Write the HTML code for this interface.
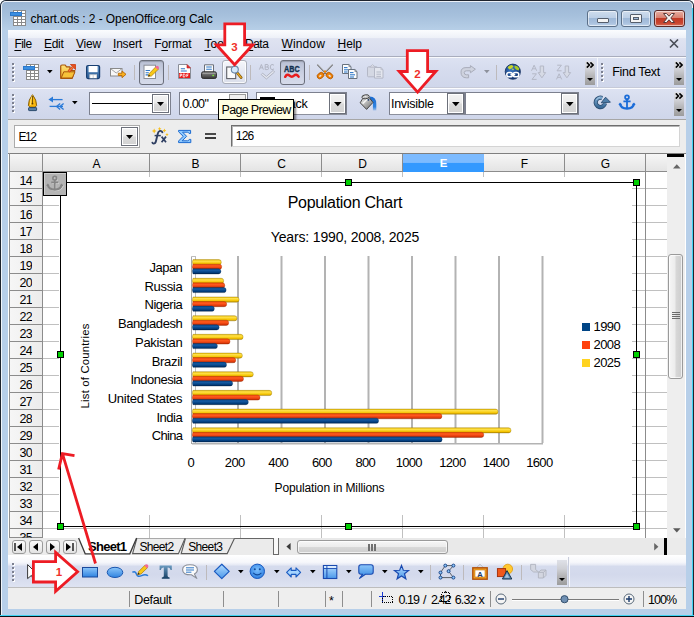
<!DOCTYPE html>
<html>
<head>
<meta charset="utf-8">
<title>chart.ods : 2 - OpenOffice.org Calc</title>
<style>
*{box-sizing:border-box;margin:0;padding:0}
html,body{width:694px;height:617px;overflow:hidden;background:#fff}
body{font-family:"Liberation Sans",sans-serif;font-size:12px;color:#000;position:relative}
.a{position:absolute}
.t{position:absolute;white-space:pre}
u{text-decoration:underline;text-underline-offset:1.5px;text-decoration-thickness:1px}
.tbbg{background:linear-gradient(#dde2f2 0,#d6dcee 40%,#cfd6ea 100%)}
.sep{position:absolute;width:1px;background:#bdbabc}
.ovf{position:absolute;width:10px;background:linear-gradient(#dfe1e8 0,#cfd0d5 35%,#b4b4b6 65%,#9c9c9c 100%)}
.combo{position:absolute;background:#fff;border:1px solid #7c808e;border-bottom-color:#8c909c}
.cbtn{position:absolute;border:1px solid #6c707a;background:linear-gradient(#f3f3f3 0,#ebebeb 48%,#dadada 52%,#d2d2d2 100%);box-shadow:inset 0 0 0 1px #fff}
.hd{position:absolute;background:linear-gradient(#f6f6f6 0,#ededed 50%,#e4e4e4 100%);border-right:1px solid #8c8c8c;border-bottom:1px solid #8c8c8c}
.handle{position:absolute;width:7px;height:7px;background:#00d000;border:1px solid #000}
</style>
</head>
<body>
<div class="a" style="left:0px;top:0px;width:694px;height:617px;background:#b7cfe9;border-radius:6px 6px 0 0;overflow:hidden"><div class="a" style="left:0px;top:0px;width:694px;height:31px;background:linear-gradient(#9ab5d3 0,#a6c0dc 50%,#b8d0e8 100%)"></div></div>
<div class="a" style="left:0px;top:0px;width:694px;height:616px;border:1px solid #1e242e;border-bottom:none;border-radius:6px 6px 0 0;"></div>
<div class="a" style="left:1px;top:1px;width:692px;height:615px;border:1px solid rgba(255,255,255,.8);border-bottom:none;border-radius:5px 5px 0 0;"></div>
<div class="a" style="left:692px;top:8px;width:1px;height:608px;background:#3fd3f2"></div>
<div class="a" style="left:0px;top:615px;width:694px;height:1px;background:#3fd3f2"></div>
<div class="a" style="left:0px;top:616px;width:694px;height:1px;background:#0a1016"></div>
<div class="t" style="left:30.60px;top:13.40px;font-size:12px;line-height:12px;letter-spacing:-0.092px;">chart.ods : 2 - OpenOffice.org Calc</div>
<div class="a" style="left:587px;top:10px;width:31px;height:17px;border:1px solid #5b7089;border-radius:3px;background:linear-gradient(#cfdded 0,#bccfe6 45%,#9fb9d8 50%,#a9c1de 80%,#bfd3ea 100%);box-shadow:inset 0 0 0 1px rgba(255,255,255,.55)"></div>
<div class="a" style="left:620.5px;top:10px;width:30px;height:17px;border:1px solid #5b7089;border-radius:3px;background:linear-gradient(#cfdded 0,#bccfe6 45%,#9fb9d8 50%,#a9c1de 80%,#bfd3ea 100%);box-shadow:inset 0 0 0 1px rgba(255,255,255,.55)"></div>
<div class="a" style="left:653.5px;top:10px;width:31px;height:17px;border:1px solid #5a2a28;border-radius:3px;background:linear-gradient(#e8b0a4 0,#d88070 45%,#c23a26 50%,#c8452f 80%,#d8705a 100%);box-shadow:inset 0 0 0 1px rgba(255,255,255,.55)"></div>
<div class="a" style="left:597px;top:18px;width:12px;height:5px;background:#f4f4f4;border:1px solid #555e6c;border-radius:1px"></div>
<div class="a" style="left:630px;top:14px;width:12px;height:9px;background:#f4f4f4;border:1px solid #555e6c;border-radius:1px"></div>
<div class="a" style="left:633px;top:17px;width:6px;height:3px;background:#9fb9d8;border:1px solid #555e6c"></div>
<svg class="a" style="left:661px;top:12px;" width="16" height="12" viewBox="0 0 16 12"><path d="M2.5 1.5 L5.5 1.5 L8 4.2 L10.5 1.5 L13.5 1.5 L9.8 6 L13.5 10.5 L10.5 10.5 L8 7.8 L5.5 10.5 L2.5 10.5 L6.2 6 Z" fill="#f6f6f6" stroke="#5a3a3a" stroke-width="1"/></svg>
<div class="a" style="left:8px;top:30px;width:678px;height:27px;background:linear-gradient(#fbfcfe 0,#eef1f8 28%,#dfe3f1 32%,#d6dbed 100%)"></div>
<div class="a" style="left:8px;top:56px;width:678px;height:1px;background:#a9adbd"></div>
<div class="t" style="left:14.40px;top:38.00px;font-size:12px;line-height:12px;letter-spacing:-0.511px;"><u>F</u>ile</div>
<div class="t" style="left:44.00px;top:38.00px;font-size:12px;line-height:12px;letter-spacing:-0.322px;"><u>E</u>dit</div>
<div class="t" style="left:76.00px;top:38.00px;font-size:12px;line-height:12px;letter-spacing:-0.224px;"><u>V</u>iew</div>
<div class="t" style="left:113.00px;top:38.00px;font-size:12px;line-height:12px;letter-spacing:-0.203px;"><u>I</u>nsert</div>
<div class="t" style="left:154.20px;top:38.00px;font-size:12px;line-height:12px;letter-spacing:-0.103px;">F<u>o</u>rmat</div>
<div class="t" style="left:204.40px;top:38.00px;font-size:12px;line-height:12px;letter-spacing:0.117px;"><u>T</u>ools</div>
<div class="t" style="left:245.00px;top:38.00px;font-size:12px;line-height:12px;letter-spacing:-0.490px;"><u>D</u>ata</div>
<div class="t" style="left:281.60px;top:38.00px;font-size:12px;line-height:12px;letter-spacing:0.102px;"><u>W</u>indow</div>
<div class="t" style="left:337.50px;top:38.00px;font-size:12px;line-height:12px;letter-spacing:-0.047px;"><u>H</u>elp</div>
<svg class="a" style="left:669px;top:39px;" width="10" height="9" viewBox="0 0 10 9"><path d="M1 0.5 L9 8.5 M9 0.5 L1 8.5" stroke="#4a4e58" stroke-width="1.6" fill="none"/></svg>
<div class="a tbbg" style="left:8px;top:57px;width:678px;height:31px;"></div>
<div class="a" style="left:8px;top:57px;width:678px;height:1px;background:#f8f9fc"></div>
<div class="a tbbg" style="left:8px;top:89px;width:678px;height:30px;"></div>
<div class="a" style="left:8px;top:87px;width:678px;height:1px;background:#c6cad8"></div>
<div class="a" style="left:8px;top:88px;width:678px;height:1px;background:#fbfcfe"></div>
<div class="a" style="left:8px;top:119px;width:678px;height:1px;background:#a6a6a6"></div>
<div class="a" style="left:13px;top:64px;width:2px;height:2px;background:#fff"></div><div class="a" style="left:12px;top:63px;width:2px;height:2px;background:#7c8090"></div><div class="a" style="left:13px;top:68px;width:2px;height:2px;background:#fff"></div><div class="a" style="left:12px;top:67px;width:2px;height:2px;background:#7c8090"></div><div class="a" style="left:13px;top:72px;width:2px;height:2px;background:#fff"></div><div class="a" style="left:12px;top:71px;width:2px;height:2px;background:#7c8090"></div><div class="a" style="left:13px;top:76px;width:2px;height:2px;background:#fff"></div><div class="a" style="left:12px;top:75px;width:2px;height:2px;background:#7c8090"></div><div class="a" style="left:13px;top:80px;width:2px;height:2px;background:#fff"></div><div class="a" style="left:12px;top:79px;width:2px;height:2px;background:#7c8090"></div>
<div class="a" style="left:13px;top:95px;width:2px;height:2px;background:#fff"></div><div class="a" style="left:12px;top:94px;width:2px;height:2px;background:#7c8090"></div><div class="a" style="left:13px;top:99px;width:2px;height:2px;background:#fff"></div><div class="a" style="left:12px;top:98px;width:2px;height:2px;background:#7c8090"></div><div class="a" style="left:13px;top:103px;width:2px;height:2px;background:#fff"></div><div class="a" style="left:12px;top:102px;width:2px;height:2px;background:#7c8090"></div><div class="a" style="left:13px;top:107px;width:2px;height:2px;background:#fff"></div><div class="a" style="left:12px;top:106px;width:2px;height:2px;background:#7c8090"></div><div class="a" style="left:13px;top:111px;width:2px;height:2px;background:#fff"></div><div class="a" style="left:12px;top:110px;width:2px;height:2px;background:#7c8090"></div>
<div class="a" style="left:602px;top:64px;width:2px;height:2px;background:#fff"></div><div class="a" style="left:601px;top:63px;width:2px;height:2px;background:#7c8090"></div><div class="a" style="left:602px;top:68px;width:2px;height:2px;background:#fff"></div><div class="a" style="left:601px;top:67px;width:2px;height:2px;background:#7c8090"></div><div class="a" style="left:602px;top:72px;width:2px;height:2px;background:#fff"></div><div class="a" style="left:601px;top:71px;width:2px;height:2px;background:#7c8090"></div><div class="a" style="left:602px;top:76px;width:2px;height:2px;background:#fff"></div><div class="a" style="left:601px;top:75px;width:2px;height:2px;background:#7c8090"></div><div class="a" style="left:602px;top:80px;width:2px;height:2px;background:#fff"></div><div class="a" style="left:601px;top:79px;width:2px;height:2px;background:#7c8090"></div>
<div class="sep" style="left:134px;top:65px;height:15px"></div>
<div class="sep" style="left:167.5px;top:65px;height:15px"></div>
<div class="sep" style="left:250px;top:65px;height:15px"></div>
<div class="sep" style="left:308.5px;top:65px;height:15px"></div>
<div class="sep" style="left:496px;top:65px;height:15px"></div>
<div class="a" style="left:596.5px;top:58px;width:1px;height:29px;background:#f4f6fb"></div>
<svg class="a" style="left:46.7px;top:70px;" width="6" height="4" viewBox="0 0 6 4"><path d="M0 0 H5.6 L2.8 3.3 Z" fill="#000"/></svg>
<svg class="a" style="left:483.8px;top:70px;" width="6" height="4" viewBox="0 0 6 4"><path d="M0 0 H5.6 L2.8 3.3 Z" fill="#8d919c"/></svg>
<div class="ovf" style="left:585px;top:61px;height:24px"></div><svg class="a" style="left:586px;top:62px;" width="8" height="6" viewBox="0 0 8 6"><path d="M0.8 0.4 L3.4 3 L0.8 5.6 M4.4 0.4 L7 3 L4.4 5.6" stroke="#000" stroke-width="1.6" fill="none"/></svg><svg class="a" style="left:587px;top:78px;" width="6" height="3" viewBox="0 0 6 3"><path d="M0 0 H6 L3 3 Z" fill="#000"/></svg>
<div class="ovf" style="left:674px;top:61px;height:24px"></div><svg class="a" style="left:675px;top:62px;" width="8" height="6" viewBox="0 0 8 6"><path d="M0.8 0.4 L3.4 3 L0.8 5.6 M4.4 0.4 L7 3 L4.4 5.6" stroke="#000" stroke-width="1.6" fill="none"/></svg><svg class="a" style="left:676px;top:78px;" width="6" height="3" viewBox="0 0 6 3"><path d="M0 0 H6 L3 3 Z" fill="#000"/></svg>
<div class="ovf" style="left:674px;top:92px;height:24px"></div><svg class="a" style="left:675px;top:93px;" width="8" height="6" viewBox="0 0 8 6"><path d="M0.8 0.4 L3.4 3 L0.8 5.6 M4.4 0.4 L7 3 L4.4 5.6" stroke="#000" stroke-width="1.6" fill="none"/></svg><svg class="a" style="left:676px;top:109px;" width="6" height="3" viewBox="0 0 6 3"><path d="M0 0 H6 L3 3 Z" fill="#000"/></svg>
<div class="t" style="left:612.30px;top:66.15px;font-size:12.5px;line-height:12.5px;letter-spacing:-0.322px;">Find Text</div>
<div class="a" style="left:139px;top:60px;width:25px;height:25px;border:1px solid #6b6f7c;border-radius:3px;background:linear-gradient(#b9c0d4,#cdd3e4 60%,#d6dbea);box-shadow:inset 0 1px 1px rgba(0,0,0,.18)"></div>
<div class="a" style="left:280px;top:60px;width:25px;height:25px;border:1px solid #6b6f7c;border-radius:3px;background:linear-gradient(#b9c0d4,#cdd3e4 60%,#d6dbea);box-shadow:inset 0 1px 1px rgba(0,0,0,.18)"></div>
<div class="a" style="left:222px;top:60px;width:25px;height:24px;border:1px solid #a9adb8;border-radius:3px;background:linear-gradient(#f6f7fb,#e6e9f3 50%,#dadeea);box-shadow:inset 0 0 0 1px rgba(255,255,255,.8)"></div>
<div class="combo" style="left:89px;top:92px;width:82px;height:23px"></div><div class="cbtn" style="left:152px;top:94px;width:17px;height:19px"></div><svg class="a" style="left:157px;top:102.0px;" width="7" height="4" viewBox="0 0 7 4"><path d="M0 0 H7 L3.5 4 Z" fill="#000"/></svg>
<div class="a" style="left:92px;top:103px;width:60px;height:1px;background:#000"></div>
<div class="combo" style="left:179px;top:92px;width:69px;height:23px"></div>
<div class="t" style="left:182.60px;top:97.85px;font-size:12.5px;line-height:12.5px;letter-spacing:-0.636px;">0.00"</div>
<div class="a" style="left:229px;top:94px;width:17px;height:19px;border:1px solid #9a9a9a;background:#f0f0f0"></div>
<div class="combo" style="left:256px;top:92px;width:91px;height:23px"></div><div class="cbtn" style="left:329px;top:93px;width:17px;height:21px"></div><svg class="a" style="left:333.6px;top:102.0px;" width="8" height="5" viewBox="0 0 8 5"><path d="M0 0 H7.6 L3.8 4.2 Z" fill="#000"/></svg>
<div class="a" style="left:260px;top:97px;width:15px;height:9px;background:#000"></div>
<div class="t" style="left:278.00px;top:97.85px;font-size:12.5px;line-height:12.5px;letter-spacing:-0.196px;">Black</div>
<div class="combo" style="left:389px;top:92px;width:76px;height:23px"></div><div class="cbtn" style="left:447px;top:93px;width:17px;height:21px"></div><svg class="a" style="left:451.6px;top:102.0px;" width="8" height="5" viewBox="0 0 8 5"><path d="M0 0 H7.6 L3.8 4.2 Z" fill="#000"/></svg>
<div class="t" style="left:391.00px;top:97.85px;font-size:12.5px;line-height:12.5px;letter-spacing:-0.275px;">Invisible</div>
<div class="combo" style="left:465px;top:92px;width:114px;height:23px"></div><div class="cbtn" style="left:561px;top:93px;width:17px;height:21px"></div><svg class="a" style="left:565.6px;top:102.0px;" width="8" height="5" viewBox="0 0 8 5"><path d="M0 0 H7.6 L3.8 4.2 Z" fill="#000"/></svg>
<svg class="a" style="left:71.8px;top:101px;" width="6" height="4" viewBox="0 0 6 4"><path d="M0 0 H5.6 L2.8 3.3 Z" fill="#000"/></svg>
<div class="a" style="left:218px;top:99px;width:76px;height:21px;background:#ffffe1;border:1px solid #000;box-shadow:2px 2px 2px rgba(0,0,0,.45)"></div>
<div class="t" style="left:221.60px;top:103.75px;font-size:12.5px;line-height:12.5px;letter-spacing:-0.677px;">Page Preview</div>
<div class="a" style="left:8px;top:120px;width:678px;height:33px;background:#ededed"></div>
<div class="a" style="left:14px;top:125px;width:126px;height:23px;background:#fff;border:1px solid #ababab"></div>
<div class="a cbtn" style="left:121px;top:127px;width:17px;height:19px;"></div>
<svg class="a" style="left:126px;top:135px;" width="7" height="4" viewBox="0 0 7 4"><path d="M0 0 H7 L3.5 4 Z" fill="#000"/></svg>
<div class="t" style="left:18.50px;top:131.00px;font-size:12px;line-height:12px;letter-spacing:-1.453px;">E12</div>
<div class="a" style="left:231px;top:125px;width:449px;height:22px;background:#fff;border:1px solid #d4d4d4;border-top:1px solid #6e6e6e;border-left:1px solid #6e6e6e;box-shadow:inset 1px 1px 0 #b4b4b4"></div>
<div class="t" style="left:235.80px;top:130.40px;font-size:12px;line-height:12px;letter-spacing:-0.810px;">126</div>
<div class="a" style="left:205px;top:133px;width:11px;height:2px;background:#4a4a4a"></div>
<div class="a" style="left:205px;top:137px;width:11px;height:2px;background:#3a3a3a"></div>
<div class="a" style="left:8px;top:153px;width:678px;height:385px;background:#fff"></div>
<div class="a" style="left:8px;top:153px;width:678px;height:1px;background:#7f7f7f"></div>
<div class="a" style="left:9px;top:153px;width:1px;height:385px;background:#8f8f8f"></div>
<div class="hd" style="left:10px;top:154px;width:33px;height:18px"></div>
<div class="hd" style="left:43px;top:154px;width:107px;height:18px"></div>
<div class="t" style="left:92.49px;top:157.60px;font-size:12px;line-height:12px;">A</div>
<div class="hd" style="left:150px;top:154px;width:91px;height:18px"></div>
<div class="t" style="left:191.49px;top:157.60px;font-size:12px;line-height:12px;">B</div>
<div class="hd" style="left:241px;top:154px;width:81px;height:18px"></div>
<div class="t" style="left:277.16px;top:157.60px;font-size:12px;line-height:12px;">C</div>
<div class="hd" style="left:322px;top:154px;width:81px;height:18px"></div>
<div class="t" style="left:358.16px;top:157.60px;font-size:12px;line-height:12px;">D</div>
<div class="a" style="left:403px;top:154px;width:81px;height:18px;background:linear-gradient(#7dbbff 0,#7dbbff 47%,#3399ff 50%,#3399ff 100%)"></div>
<div class="t" style="left:439.86px;top:157.85px;font-size:11.5px;line-height:11.5px;font-weight:700;color:#fff;">E</div>
<div class="hd" style="left:484px;top:154px;width:81px;height:18px"></div>
<div class="t" style="left:520.83px;top:157.60px;font-size:12px;line-height:12px;">F</div>
<div class="hd" style="left:565px;top:154px;width:81px;height:18px"></div>
<div class="t" style="left:600.83px;top:157.60px;font-size:12px;line-height:12px;">G</div>
<div class="hd" style="left:646px;top:154px;width:22px;height:18px"></div>
<div class="hd" style="left:10px;top:172px;width:33px;height:17px;background:linear-gradient(90deg,#f6f6f6,#ececec)"></div>
<div class="t" style="left:19.50px;top:174.95px;font-size:12.5px;line-height:12.5px;letter-spacing:-0.653px;clip-path:inset(0 0 0px 0);">14</div>
<div class="hd" style="left:10px;top:189px;width:33px;height:17px;background:linear-gradient(90deg,#f6f6f6,#ececec)"></div>
<div class="t" style="left:19.50px;top:191.95px;font-size:12.5px;line-height:12.5px;letter-spacing:-0.653px;clip-path:inset(0 0 0px 0);">15</div>
<div class="hd" style="left:10px;top:206px;width:33px;height:17px;background:linear-gradient(90deg,#f6f6f6,#ececec)"></div>
<div class="t" style="left:19.50px;top:208.95px;font-size:12.5px;line-height:12.5px;letter-spacing:-0.653px;clip-path:inset(0 0 0px 0);">16</div>
<div class="hd" style="left:10px;top:223px;width:33px;height:17px;background:linear-gradient(90deg,#f6f6f6,#ececec)"></div>
<div class="t" style="left:19.50px;top:225.95px;font-size:12.5px;line-height:12.5px;letter-spacing:-0.653px;clip-path:inset(0 0 0px 0);">17</div>
<div class="hd" style="left:10px;top:240px;width:33px;height:17px;background:linear-gradient(90deg,#f6f6f6,#ececec)"></div>
<div class="t" style="left:19.50px;top:242.95px;font-size:12.5px;line-height:12.5px;letter-spacing:-0.653px;clip-path:inset(0 0 0px 0);">18</div>
<div class="hd" style="left:10px;top:257px;width:33px;height:17px;background:linear-gradient(90deg,#f6f6f6,#ececec)"></div>
<div class="t" style="left:19.50px;top:259.95px;font-size:12.5px;line-height:12.5px;letter-spacing:-0.653px;clip-path:inset(0 0 0px 0);">19</div>
<div class="hd" style="left:10px;top:274px;width:33px;height:17px;background:linear-gradient(90deg,#f6f6f6,#ececec)"></div>
<div class="t" style="left:19.50px;top:276.95px;font-size:12.5px;line-height:12.5px;letter-spacing:-0.653px;clip-path:inset(0 0 0px 0);">20</div>
<div class="hd" style="left:10px;top:291px;width:33px;height:17px;background:linear-gradient(90deg,#f6f6f6,#ececec)"></div>
<div class="t" style="left:19.50px;top:293.95px;font-size:12.5px;line-height:12.5px;letter-spacing:-0.653px;clip-path:inset(0 0 0px 0);">21</div>
<div class="hd" style="left:10px;top:308px;width:33px;height:17px;background:linear-gradient(90deg,#f6f6f6,#ececec)"></div>
<div class="t" style="left:19.50px;top:310.95px;font-size:12.5px;line-height:12.5px;letter-spacing:-0.653px;clip-path:inset(0 0 0px 0);">22</div>
<div class="hd" style="left:10px;top:325px;width:33px;height:17px;background:linear-gradient(90deg,#f6f6f6,#ececec)"></div>
<div class="t" style="left:19.50px;top:327.95px;font-size:12.5px;line-height:12.5px;letter-spacing:-0.653px;clip-path:inset(0 0 0px 0);">23</div>
<div class="hd" style="left:10px;top:342px;width:33px;height:17px;background:linear-gradient(90deg,#f6f6f6,#ececec)"></div>
<div class="t" style="left:19.50px;top:344.95px;font-size:12.5px;line-height:12.5px;letter-spacing:-0.653px;clip-path:inset(0 0 0px 0);">24</div>
<div class="hd" style="left:10px;top:359px;width:33px;height:17px;background:linear-gradient(90deg,#f6f6f6,#ececec)"></div>
<div class="t" style="left:19.50px;top:361.95px;font-size:12.5px;line-height:12.5px;letter-spacing:-0.653px;clip-path:inset(0 0 0px 0);">25</div>
<div class="hd" style="left:10px;top:376px;width:33px;height:17px;background:linear-gradient(90deg,#f6f6f6,#ececec)"></div>
<div class="t" style="left:19.50px;top:378.95px;font-size:12.5px;line-height:12.5px;letter-spacing:-0.653px;clip-path:inset(0 0 0px 0);">26</div>
<div class="hd" style="left:10px;top:393px;width:33px;height:17px;background:linear-gradient(90deg,#f6f6f6,#ececec)"></div>
<div class="t" style="left:19.50px;top:395.95px;font-size:12.5px;line-height:12.5px;letter-spacing:-0.653px;clip-path:inset(0 0 0px 0);">27</div>
<div class="hd" style="left:10px;top:410px;width:33px;height:17px;background:linear-gradient(90deg,#f6f6f6,#ececec)"></div>
<div class="t" style="left:19.50px;top:412.95px;font-size:12.5px;line-height:12.5px;letter-spacing:-0.653px;clip-path:inset(0 0 0px 0);">28</div>
<div class="hd" style="left:10px;top:427px;width:33px;height:17px;background:linear-gradient(90deg,#f6f6f6,#ececec)"></div>
<div class="t" style="left:19.50px;top:429.95px;font-size:12.5px;line-height:12.5px;letter-spacing:-0.653px;clip-path:inset(0 0 0px 0);">29</div>
<div class="hd" style="left:10px;top:444px;width:33px;height:17px;background:linear-gradient(90deg,#f6f6f6,#ececec)"></div>
<div class="t" style="left:19.50px;top:446.95px;font-size:12.5px;line-height:12.5px;letter-spacing:-0.653px;clip-path:inset(0 0 0px 0);">30</div>
<div class="hd" style="left:10px;top:461px;width:33px;height:17px;background:linear-gradient(90deg,#f6f6f6,#ececec)"></div>
<div class="t" style="left:19.50px;top:463.95px;font-size:12.5px;line-height:12.5px;letter-spacing:-0.653px;clip-path:inset(0 0 0px 0);">31</div>
<div class="hd" style="left:10px;top:478px;width:33px;height:17px;background:linear-gradient(90deg,#f6f6f6,#ececec)"></div>
<div class="t" style="left:19.50px;top:480.95px;font-size:12.5px;line-height:12.5px;letter-spacing:-0.653px;clip-path:inset(0 0 0px 0);">32</div>
<div class="hd" style="left:10px;top:495px;width:33px;height:17px;background:linear-gradient(90deg,#f6f6f6,#ececec)"></div>
<div class="t" style="left:19.50px;top:497.95px;font-size:12.5px;line-height:12.5px;letter-spacing:-0.653px;clip-path:inset(0 0 0px 0);">33</div>
<div class="hd" style="left:10px;top:512px;width:33px;height:17px;background:linear-gradient(90deg,#f6f6f6,#ececec)"></div>
<div class="t" style="left:19.50px;top:514.95px;font-size:12.5px;line-height:12.5px;letter-spacing:-0.653px;clip-path:inset(0 0 0px 0);">34</div>
<div class="hd" style="left:10px;top:529px;width:33px;height:9px;background:linear-gradient(90deg,#f6f6f6,#ececec)"></div>
<div class="t" style="left:19.50px;top:531.95px;font-size:12.5px;line-height:12.5px;letter-spacing:-0.653px;clip-path:inset(0 0 7px 0);">35</div>
<div class="a" style="left:43px;top:188px;width:624px;height:1px;background:#c0c0c0"></div>
<div class="a" style="left:43px;top:205px;width:624px;height:1px;background:#c0c0c0"></div>
<div class="a" style="left:43px;top:222px;width:624px;height:1px;background:#c0c0c0"></div>
<div class="a" style="left:43px;top:239px;width:624px;height:1px;background:#c0c0c0"></div>
<div class="a" style="left:43px;top:256px;width:624px;height:1px;background:#c0c0c0"></div>
<div class="a" style="left:43px;top:273px;width:624px;height:1px;background:#c0c0c0"></div>
<div class="a" style="left:43px;top:290px;width:624px;height:1px;background:#c0c0c0"></div>
<div class="a" style="left:43px;top:307px;width:624px;height:1px;background:#c0c0c0"></div>
<div class="a" style="left:43px;top:324px;width:624px;height:1px;background:#c0c0c0"></div>
<div class="a" style="left:43px;top:341px;width:624px;height:1px;background:#c0c0c0"></div>
<div class="a" style="left:43px;top:358px;width:624px;height:1px;background:#c0c0c0"></div>
<div class="a" style="left:43px;top:375px;width:624px;height:1px;background:#c0c0c0"></div>
<div class="a" style="left:43px;top:392px;width:624px;height:1px;background:#c0c0c0"></div>
<div class="a" style="left:43px;top:409px;width:624px;height:1px;background:#c0c0c0"></div>
<div class="a" style="left:43px;top:426px;width:624px;height:1px;background:#c0c0c0"></div>
<div class="a" style="left:43px;top:443px;width:624px;height:1px;background:#c0c0c0"></div>
<div class="a" style="left:43px;top:460px;width:624px;height:1px;background:#c0c0c0"></div>
<div class="a" style="left:43px;top:477px;width:624px;height:1px;background:#c0c0c0"></div>
<div class="a" style="left:43px;top:494px;width:624px;height:1px;background:#c0c0c0"></div>
<div class="a" style="left:43px;top:511px;width:624px;height:1px;background:#c0c0c0"></div>
<div class="a" style="left:43px;top:528px;width:624px;height:1px;background:#c0c0c0"></div>
<div class="a" style="left:149px;top:172px;width:1px;height:366px;background:#c0c0c0"></div>
<div class="a" style="left:240px;top:172px;width:1px;height:366px;background:#c0c0c0"></div>
<div class="a" style="left:321px;top:172px;width:1px;height:366px;background:#c0c0c0"></div>
<div class="a" style="left:402px;top:172px;width:1px;height:366px;background:#c0c0c0"></div>
<div class="a" style="left:483px;top:172px;width:1px;height:366px;background:#c0c0c0"></div>
<div class="a" style="left:564px;top:172px;width:1px;height:366px;background:#c0c0c0"></div>
<div class="a" style="left:645px;top:172px;width:1px;height:366px;background:#c0c0c0"></div>
<div class="a" style="left:645px;top:172px;width:1px;height:366px;background:#8c8c8c"></div>
<div class="a" style="left:59px;top:177px;width:573px;height:338px;background:#fff"></div>
<div class="t" style="left:287.70px;top:194.50px;font-size:16px;line-height:16px;letter-spacing:-0.299px;">Population Chart</div>
<div class="t" style="left:270.80px;top:230.00px;font-size:14px;line-height:14px;letter-spacing:-0.159px;">Years: 1990, 2008, 2025</div>
<div class="t" style="left:149.60px;top:261.00px;font-size:13px;line-height:13px;letter-spacing:-0.544px;">Japan</div>
<div class="t" style="left:144.50px;top:280.00px;font-size:13px;line-height:13px;letter-spacing:-0.325px;">Russia</div>
<div class="t" style="left:144.50px;top:298.00px;font-size:13px;line-height:13px;letter-spacing:-0.484px;">Nigeria</div>
<div class="t" style="left:118.00px;top:317.00px;font-size:13px;line-height:13px;letter-spacing:-0.437px;">Bangladesh</div>
<div class="t" style="left:135.10px;top:336.00px;font-size:13px;line-height:13px;letter-spacing:-0.334px;">Pakistan</div>
<div class="t" style="left:151.70px;top:355.00px;font-size:13px;line-height:13px;letter-spacing:-0.319px;">Brazil</div>
<div class="t" style="left:130.50px;top:373.00px;font-size:13px;line-height:13px;letter-spacing:-0.510px;">Indonesia</div>
<div class="t" style="left:107.70px;top:392.00px;font-size:13px;line-height:13px;letter-spacing:-0.265px;">United States</div>
<div class="t" style="left:156.40px;top:411.00px;font-size:13px;line-height:13px;letter-spacing:-0.461px;">India</div>
<div class="t" style="left:151.70px;top:429.00px;font-size:13px;line-height:13px;letter-spacing:-0.674px;">China</div>
<svg class="a" style="left:0px;top:0px;" width="694" height="617" viewBox="0 0 694 617"><rect x="237.0" y="256" width="2" height="187" fill="#b3b3b3"/><rect x="280.5" y="256" width="2" height="187" fill="#b3b3b3"/><rect x="324.0" y="256" width="2" height="187" fill="#b3b3b3"/><rect x="367.5" y="256" width="2" height="187" fill="#b3b3b3"/><rect x="411.0" y="256" width="2" height="187" fill="#b3b3b3"/><rect x="454.5" y="256" width="2" height="187" fill="#b3b3b3"/><rect x="498.0" y="256" width="2" height="187" fill="#b3b3b3"/><rect x="541.5" y="256" width="2" height="187" fill="#b3b3b3"/><path d="M191.5 256.5 L191.5 444" stroke="#a8a8a8" stroke-width="1" fill="none"/><path d="M192 443.8 L543 443.8" stroke="#b3b3b3" stroke-width="1.6" fill="none"/><path d="M191.5 256.5 L196 256.5 M195.5 256.5 V443" stroke="#bdbdbd" stroke-width="1" fill="none"/><defs>
<linearGradient id="gy" x1="0" y1="0" x2="0" y2="1"><stop offset="0" stop-color="#e6b800"/><stop offset=".3" stop-color="#ffe14a"/><stop offset=".75" stop-color="#f5c400"/><stop offset="1" stop-color="#b88a00"/></linearGradient>
<linearGradient id="go" x1="0" y1="0" x2="0" y2="1"><stop offset="0" stop-color="#f0480c"/><stop offset=".35" stop-color="#ff5a1e"/><stop offset=".8" stop-color="#e0380a"/><stop offset="1" stop-color="#9c2400"/></linearGradient>
<linearGradient id="gb" x1="0" y1="0" x2="0" y2="1"><stop offset="0" stop-color="#0a4a8c"/><stop offset=".35" stop-color="#1458a0"/><stop offset=".8" stop-color="#003a78"/><stop offset="1" stop-color="#00244e"/></linearGradient>
</defs><path d="M193 259.60 H218.8 Q221.3 259.60 221.3 262.20 Q221.3 264.80 218.8 264.80 H193 Q191.6 262.20 193 259.60 Z" fill="url(#gy)" stroke="#8a6c00" stroke-width="0.5" stroke-opacity=".7"/><path d="M193 264.15 H219.2 Q221.7 264.15 221.7 266.75 Q221.7 269.35 219.2 269.35 H193 Q191.6 266.75 193 264.15 Z" fill="url(#go)" stroke="#a02c00" stroke-width="0.5" stroke-opacity=".7"/><path d="M193 268.70 H218.4 Q220.9 268.70 220.9 271.30 Q220.9 273.90 218.4 273.90 H193 Q191.6 271.30 193 268.70 Z" fill="url(#gb)" stroke="#00244e" stroke-width="0.5" stroke-opacity=".7"/><path d="M193 278.28 H221.2 Q223.7 278.28 223.7 280.88 Q223.7 283.48 221.2 283.48 H193 Q191.6 280.88 193 278.28 Z" fill="url(#gy)" stroke="#8a6c00" stroke-width="0.5" stroke-opacity=".7"/><path d="M193 282.83 H222.3 Q224.8 282.83 224.8 285.43 Q224.8 288.03 222.3 288.03 H193 Q191.6 285.43 193 282.83 Z" fill="url(#go)" stroke="#a02c00" stroke-width="0.5" stroke-opacity=".7"/><path d="M193 287.38 H223.6 Q226.1 287.38 226.1 289.98 Q226.1 292.58 223.6 292.58 H193 Q191.6 289.98 193 287.38 Z" fill="url(#gb)" stroke="#00244e" stroke-width="0.5" stroke-opacity=".7"/><path d="M193 296.96 H236.6 Q239.1 296.96 239.1 299.56 Q239.1 302.16 236.6 302.16 H193 Q191.6 299.56 193 296.96 Z" fill="url(#gy)" stroke="#8a6c00" stroke-width="0.5" stroke-opacity=".7"/><path d="M193 301.51 H224.2 Q226.7 301.51 226.7 304.11 Q226.7 306.71 224.2 306.71 H193 Q191.6 304.11 193 301.51 Z" fill="url(#go)" stroke="#a02c00" stroke-width="0.5" stroke-opacity=".7"/><path d="M193 306.06 H211.8 Q214.3 306.06 214.3 308.66 Q214.3 311.26 211.8 311.26 H193 Q191.6 308.66 193 306.06 Z" fill="url(#gb)" stroke="#00244e" stroke-width="0.5" stroke-opacity=".7"/><path d="M193 315.64 H234.5 Q237.0 315.64 237.0 318.24 Q237.0 320.84 234.5 320.84 H193 Q191.6 318.24 193 315.64 Z" fill="url(#gy)" stroke="#8a6c00" stroke-width="0.5" stroke-opacity=".7"/><path d="M193 320.19 H226.2 Q228.7 320.19 228.7 322.79 Q228.7 325.39 226.2 325.39 H193 Q191.6 322.79 193 320.19 Z" fill="url(#go)" stroke="#a02c00" stroke-width="0.5" stroke-opacity=".7"/><path d="M193 324.74 H216.6 Q219.1 324.74 219.1 327.34 Q219.1 329.94 216.6 329.94 H193 Q191.6 327.34 193 324.74 Z" fill="url(#gb)" stroke="#00244e" stroke-width="0.5" stroke-opacity=".7"/><path d="M193 334.32 H240.6 Q243.1 334.32 243.1 336.92 Q243.1 339.52 240.6 339.52 H193 Q191.6 336.92 193 334.32 Z" fill="url(#gy)" stroke="#8a6c00" stroke-width="0.5" stroke-opacity=".7"/><path d="M193 338.87 H227.5 Q230.0 338.87 230.0 341.47 Q230.0 344.07 227.5 344.07 H193 Q191.6 341.47 193 338.87 Z" fill="url(#go)" stroke="#a02c00" stroke-width="0.5" stroke-opacity=".7"/><path d="M193 343.42 H214.9 Q217.4 343.42 217.4 346.02 Q217.4 348.62 214.9 348.62 H193 Q191.6 346.02 193 343.42 Z" fill="url(#gb)" stroke="#00244e" stroke-width="0.5" stroke-opacity=".7"/><path d="M193 353.00 H239.9 Q242.4 353.00 242.4 355.60 Q242.4 358.20 239.9 358.20 H193 Q191.6 355.60 193 353.00 Z" fill="url(#gy)" stroke="#8a6c00" stroke-width="0.5" stroke-opacity=".7"/><path d="M193 357.55 H233.2 Q235.7 357.55 235.7 360.15 Q235.7 362.75 233.2 362.75 H193 Q191.6 360.15 193 357.55 Z" fill="url(#go)" stroke="#a02c00" stroke-width="0.5" stroke-opacity=".7"/><path d="M193 362.10 H224.0 Q226.5 362.10 226.5 364.70 Q226.5 367.30 224.0 367.30 H193 Q191.6 364.70 193 362.10 Z" fill="url(#gb)" stroke="#00244e" stroke-width="0.5" stroke-opacity=".7"/><path d="M193 371.68 H250.8 Q253.3 371.68 253.3 374.28 Q253.3 376.88 250.8 376.88 H193 Q191.6 374.28 193 371.68 Z" fill="url(#gy)" stroke="#8a6c00" stroke-width="0.5" stroke-opacity=".7"/><path d="M193 376.23 H241.0 Q243.5 376.23 243.5 378.83 Q243.5 381.43 241.0 381.43 H193 Q191.6 378.83 193 376.23 Z" fill="url(#go)" stroke="#a02c00" stroke-width="0.5" stroke-opacity=".7"/><path d="M193 380.78 H230.1 Q232.6 380.78 232.6 383.38 Q232.6 385.98 230.1 385.98 H193 Q191.6 383.38 193 380.78 Z" fill="url(#gb)" stroke="#00244e" stroke-width="0.5" stroke-opacity=".7"/><path d="M193 390.36 H269.3 Q271.8 390.36 271.8 392.96 Q271.8 395.56 269.3 395.56 H193 Q191.6 392.96 193 390.36 Z" fill="url(#gy)" stroke="#8a6c00" stroke-width="0.5" stroke-opacity=".7"/><path d="M193 394.91 H257.5 Q260.0 394.91 260.0 397.51 Q260.0 400.11 257.5 400.11 H193 Q191.6 397.51 193 394.91 Z" fill="url(#go)" stroke="#a02c00" stroke-width="0.5" stroke-opacity=".7"/><path d="M193 399.46 H245.8 Q248.3 399.46 248.3 402.06 Q248.3 404.66 245.8 404.66 H193 Q191.6 402.06 193 399.46 Z" fill="url(#gb)" stroke="#00244e" stroke-width="0.5" stroke-opacity=".7"/><path d="M193 409.04 H495.5 Q498.0 409.04 498.0 411.64 Q498.0 414.24 495.5 414.24 H193 Q191.6 411.64 193 409.04 Z" fill="url(#gy)" stroke="#8a6c00" stroke-width="0.5" stroke-opacity=".7"/><path d="M193 413.59 H439.4 Q441.9 413.59 441.9 416.19 Q441.9 418.79 439.4 418.79 H193 Q191.6 416.19 193 413.59 Z" fill="url(#go)" stroke="#a02c00" stroke-width="0.5" stroke-opacity=".7"/><path d="M193 418.14 H376.1 Q378.6 418.14 378.6 420.74 Q378.6 423.34 376.1 423.34 H193 Q191.6 420.74 193 418.14 Z" fill="url(#gb)" stroke="#00244e" stroke-width="0.5" stroke-opacity=".7"/><path d="M193 427.72 H508.5 Q511.0 427.72 511.0 430.32 Q511.0 432.92 508.5 432.92 H193 Q191.6 430.32 193 427.72 Z" fill="url(#gy)" stroke="#8a6c00" stroke-width="0.5" stroke-opacity=".7"/><path d="M193 432.27 H481.3 Q483.8 432.27 483.8 434.87 Q483.8 437.47 481.3 437.47 H193 Q191.6 434.87 193 432.27 Z" fill="url(#go)" stroke="#a02c00" stroke-width="0.5" stroke-opacity=".7"/><path d="M193 436.82 H439.6 Q442.1 436.82 442.1 439.42 Q442.1 442.02 439.6 442.02 H193 Q191.6 439.42 193 436.82 Z" fill="url(#gb)" stroke="#00244e" stroke-width="0.5" stroke-opacity=".7"/></svg>
<div class="t" style="left:187.58px;top:456.00px;font-size:13px;line-height:13px;">0</div>
<div class="t" style="left:224.85px;top:456.00px;font-size:13px;line-height:13px;letter-spacing:-0.651px;">200</div>
<div class="t" style="left:268.37px;top:456.00px;font-size:13px;line-height:13px;letter-spacing:-0.651px;">400</div>
<div class="t" style="left:311.89px;top:456.00px;font-size:13px;line-height:13px;letter-spacing:-0.651px;">600</div>
<div class="t" style="left:355.41px;top:456.00px;font-size:13px;line-height:13px;letter-spacing:-0.651px;">800</div>
<div class="t" style="left:395.64px;top:456.00px;font-size:13px;line-height:13px;letter-spacing:-0.651px;">1000</div>
<div class="t" style="left:439.16px;top:456.00px;font-size:13px;line-height:13px;letter-spacing:-0.651px;">1200</div>
<div class="t" style="left:482.68px;top:456.00px;font-size:13px;line-height:13px;letter-spacing:-0.651px;">1400</div>
<div class="t" style="left:526.20px;top:456.00px;font-size:13px;line-height:13px;letter-spacing:-0.651px;">1600</div>
<div class="t" style="left:274.50px;top:482.00px;font-size:12px;line-height:12px;letter-spacing:-0.124px;">Population in Millions</div>
<div class="t" style="left:0.00px;top:-9.05px;font-size:11.3px;line-height:11.3px;letter-spacing:0.198px;transform-origin:0 0;transform:translate(80.0px,417.4px) rotate(-90deg);">List of Countries</div>
<div class="a" style="left:582px;top:323px;width:8px;height:8px;background:#004586"></div>
<div class="t" style="left:593.60px;top:320.00px;font-size:13px;line-height:13px;letter-spacing:-0.630px;">1990</div>
<div class="a" style="left:582px;top:341px;width:8px;height:8px;background:#ff420e"></div>
<div class="t" style="left:593.60px;top:338.00px;font-size:13px;line-height:13px;letter-spacing:-0.630px;">2008</div>
<div class="a" style="left:582px;top:359px;width:8px;height:8px;background:#ffd320"></div>
<div class="t" style="left:593.60px;top:356.00px;font-size:13px;line-height:13px;letter-spacing:-0.630px;">2025</div>
<div class="a" style="left:60px;top:182px;width:577px;height:345px;border:1px solid #000"></div>
<div class="handle" style="left:345px;top:179px"></div>
<div class="handle" style="left:633px;top:179px"></div>
<div class="handle" style="left:57px;top:351px"></div>
<div class="handle" style="left:633px;top:351px"></div>
<div class="handle" style="left:57px;top:523px"></div>
<div class="handle" style="left:345px;top:523px"></div>
<div class="handle" style="left:633px;top:523px"></div>
<div class="a" style="left:43px;top:172px;width:24px;height:24px;background:#b4b4b4;border:1px solid #000;box-shadow:inset 1px 1px 0 #cfcfcf"></div>
<div class="a" style="left:667px;top:154px;width:18px;height:384px;background:#eeeeee"></div>
<div class="a" style="left:667px;top:154px;width:17px;height:3px;background:#000"></div>
<svg class="a" style="left:672.5px;top:163.5px;" width="8" height="5" viewBox="0 0 8 5"><path d="M0 4.6 L3.8 0.2 L7.6 4.6 Z" fill="#666"/></svg>
<svg class="a" style="left:672.5px;top:527.5px;" width="8" height="5" viewBox="0 0 8 5"><path d="M0 0.2 L3.8 4.6 L7.6 0.2 Z" fill="#5a5a5a"/></svg>
<div class="a" style="left:668px;top:254px;width:15px;height:125px;border:1px solid #9a9a9a;border-radius:3px;background:linear-gradient(90deg,#f6f6f6 0,#ececec 47%,#d8d8d8 53%,#cdcdcd 100%);box-shadow:inset 0 0 0 1px rgba(255,255,255,.7)"></div>
<div class="a" style="left:672px;top:312px;width:8px;height:1px;background:#6a6a6a"></div>
<div class="a" style="left:672px;top:314px;width:8px;height:1px;background:#6a6a6a"></div>
<div class="a" style="left:672px;top:316px;width:8px;height:1px;background:#6a6a6a"></div>
<div class="a" style="left:672px;top:318px;width:8px;height:1px;background:#6a6a6a"></div>
<div class="a" style="left:8px;top:538px;width:678px;height:18px;background:#ebebeb"></div>
<div class="a" style="left:279px;top:538px;width:385px;height:17px;background:#e9e9e9"></div>
<div class="a" style="left:297px;top:540px;width:151px;height:14px;border:1px solid #9a9a9a;border-radius:3px;background:linear-gradient(#f6f6f6 0,#ececec 47%,#d8d8d8 53%,#cdcdcd 100%);box-shadow:inset 0 0 0 1px rgba(255,255,255,.7)"></div>
<div class="a" style="left:368px;top:544px;width:2px;height:7px;background:#707070"></div>
<div class="a" style="left:371px;top:544px;width:2px;height:7px;background:#707070"></div>
<div class="a" style="left:374px;top:544px;width:2px;height:7px;background:#707070"></div>
<svg class="a" style="left:285.5px;top:543px;" width="5" height="8" viewBox="0 0 5 8"><path d="M4.6 0 L0.4 3.6 L4.6 7.2 Z" fill="#3a3a3a"/></svg>
<svg class="a" style="left:653.5px;top:542.5px;" width="5" height="8" viewBox="0 0 5 8"><path d="M0.2 0 L4.4 3.8 L0.2 7.6 Z" fill="#666"/></svg>
<div class="a" style="left:664px;top:538px;width:3px;height:17px;background:#000"></div>
<div class="a" style="left:273px;top:538px;width:6px;height:17px;background:#f8f8f8;border:1px solid #6a6a6a;border-top:none"></div>
<div class="a" style="left:11.5px;top:540px;width:14px;height:14px;border:1px solid #9a9a9a;border-radius:3px;background:linear-gradient(#fbfbfb,#e2e2e2)"></div>
<div class="a" style="left:28.5px;top:540px;width:14px;height:14px;border:1px solid #9a9a9a;border-radius:3px;background:linear-gradient(#fbfbfb,#e2e2e2)"></div>
<div class="a" style="left:45.5px;top:540px;width:14px;height:14px;border:1px solid #9a9a9a;border-radius:3px;background:linear-gradient(#fbfbfb,#e2e2e2)"></div>
<div class="a" style="left:62.5px;top:540px;width:14px;height:14px;border:1px solid #9a9a9a;border-radius:3px;background:linear-gradient(#fbfbfb,#e2e2e2)"></div>
<svg class="a" style="left:14px;top:543px;" width="9" height="8" viewBox="0 0 9 8"><path d="M1 0 V8" stroke="#000" stroke-width="1.3"/><path d="M8 0 L3 4 L8 8 Z" fill="#000"/></svg>
<svg class="a" style="left:32px;top:543px;" width="7" height="8" viewBox="0 0 7 8"><path d="M6 0 L1 4 L6 8 Z" fill="#000"/></svg>
<svg class="a" style="left:49px;top:543px;" width="7" height="8" viewBox="0 0 7 8"><path d="M1 0 L6 4 L1 8 Z" fill="#000"/></svg>
<svg class="a" style="left:65px;top:543px;" width="9" height="8" viewBox="0 0 9 8"><path d="M8 0 V8" stroke="#000" stroke-width="1.3"/><path d="M1 0 L6 4 L1 8 Z" fill="#000"/></svg>
<svg class="a" style="left:0px;top:0px;" width="694" height="617" viewBox="0 0 694 617"><path d="M136 538.5 H273.5" stroke="#666" stroke-width="1" fill="none"/><path d="M136.8 538.5 L132.6 553.6 H178.4 L185 538.5" fill="#ececec" stroke="#5a5a5a" stroke-width="1.1"/><path d="M185.4 538.5 L181.2 553.6 H227.2 L234.4 538.5" fill="#ececec" stroke="#5a5a5a" stroke-width="1.1"/><path d="M78.6 538 L85.2 553.8 H129.8 L136.6 538 Z" fill="#fff" stroke="none"/><path d="M78.6 538 L85.2 553.8 H129.8 L136.6 538" fill="none" stroke="#3a3a3a" stroke-width="1.3"/></svg>
<div class="t" style="left:88.00px;top:540.20px;font-size:13px;line-height:13px;letter-spacing:-0.723px;font-weight:700;">Sheet1</div>
<div class="t" style="left:139.40px;top:541.00px;font-size:12px;line-height:12px;letter-spacing:-0.641px;">Sheet2</div>
<div class="t" style="left:188.20px;top:541.00px;font-size:12px;line-height:12px;letter-spacing:-0.641px;">Sheet3</div>
<div class="a" style="left:8px;top:555px;width:678px;height:33px;background:linear-gradient(#ffffff 0,#f6f7fb 22%,#e6e9f4 30%,#d5dbed 34%,#d3d9ec 60%,#dfe4f2 100%)"></div>
<div class="a" style="left:568px;top:557px;width:1px;height:30px;background:#c9cddb"></div>
<div class="a" style="left:569px;top:557px;width:1px;height:30px;background:#f8f9fc"></div>
<div class="a" style="left:13px;top:564px;width:2px;height:2px;background:#fff"></div><div class="a" style="left:12px;top:563px;width:2px;height:2px;background:#7c8090"></div><div class="a" style="left:13px;top:568px;width:2px;height:2px;background:#fff"></div><div class="a" style="left:12px;top:567px;width:2px;height:2px;background:#7c8090"></div><div class="a" style="left:13px;top:572px;width:2px;height:2px;background:#fff"></div><div class="a" style="left:12px;top:571px;width:2px;height:2px;background:#7c8090"></div><div class="a" style="left:13px;top:576px;width:2px;height:2px;background:#fff"></div><div class="a" style="left:12px;top:575px;width:2px;height:2px;background:#7c8090"></div><div class="a" style="left:13px;top:580px;width:2px;height:2px;background:#fff"></div><div class="a" style="left:12px;top:579px;width:2px;height:2px;background:#7c8090"></div>
<div class="sep" style="left:206px;top:565px;height:15px"></div>
<div class="sep" style="left:430px;top:565px;height:15px"></div>
<div class="sep" style="left:463px;top:565px;height:15px"></div>
<div class="sep" style="left:521px;top:565px;height:15px"></div>
<svg class="a" style="left:237.8px;top:570px;" width="6" height="4" viewBox="0 0 6 4"><path d="M0 0 H5.6 L2.8 3.3 Z" fill="#000"/></svg>
<svg class="a" style="left:273.7px;top:570px;" width="6" height="4" viewBox="0 0 6 4"><path d="M0 0 H5.6 L2.8 3.3 Z" fill="#000"/></svg>
<svg class="a" style="left:310px;top:570px;" width="6" height="4" viewBox="0 0 6 4"><path d="M0 0 H5.6 L2.8 3.3 Z" fill="#000"/></svg>
<svg class="a" style="left:346px;top:570px;" width="6" height="4" viewBox="0 0 6 4"><path d="M0 0 H5.6 L2.8 3.3 Z" fill="#000"/></svg>
<svg class="a" style="left:382px;top:570px;" width="6" height="4" viewBox="0 0 6 4"><path d="M0 0 H5.6 L2.8 3.3 Z" fill="#000"/></svg>
<svg class="a" style="left:417.6px;top:570px;" width="6" height="4" viewBox="0 0 6 4"><path d="M0 0 H5.6 L2.8 3.3 Z" fill="#000"/></svg>
<div class="ovf" style="left:557px;top:560px;height:25px"></div><svg class="a" style="left:559px;top:578px;" width="6" height="3" viewBox="0 0 6 3"><path d="M0 0 H6 L3 3 Z" fill="#000"/></svg>
<div class="a" style="left:8px;top:588px;width:678px;height:21px;background:#eeeeee"></div>
<div class="a" style="left:8px;top:587px;width:678px;height:1px;background:#bdbdbd"></div>
<div class="a" style="left:128.5px;top:591px;width:1px;height:16px;background:#8e8e8e"></div>
<div class="a" style="left:223px;top:591px;width:1px;height:16px;background:#8e8e8e"></div>
<div class="a" style="left:277.5px;top:591px;width:1px;height:16px;background:#8e8e8e"></div>
<div class="a" style="left:324.5px;top:591px;width:1px;height:16px;background:#8e8e8e"></div>
<div class="a" style="left:342px;top:591px;width:1px;height:16px;background:#8e8e8e"></div>
<div class="a" style="left:371px;top:591px;width:1px;height:16px;background:#8e8e8e"></div>
<div class="a" style="left:490px;top:591px;width:1px;height:16px;background:#8e8e8e"></div>
<div class="a" style="left:643px;top:591px;width:1px;height:16px;background:#8e8e8e"></div>
<div class="t" style="left:134.30px;top:594.15px;font-size:12.5px;line-height:12.5px;letter-spacing:-0.373px;">Default</div>
<div class="t" style="left:329.00px;top:595.35px;font-size:12.5px;line-height:12.5px;">*</div>
<div class="t" style="left:398.50px;top:594.15px;font-size:12.5px;line-height:12.5px;letter-spacing:-0.936px;">0.19</div>
<div class="t" style="left:423.00px;top:594.15px;font-size:12.5px;line-height:12.5px;">/</div>
<div class="t" style="left:430.90px;top:594.15px;font-size:12.5px;line-height:12.5px;letter-spacing:-1.286px;">2.42</div>
<div class="t" style="left:454.70px;top:594.15px;font-size:12.5px;line-height:12.5px;letter-spacing:-0.861px;">6.32</div>
<div class="t" style="left:478.40px;top:594.15px;font-size:12.5px;line-height:12.5px;">x</div>
<div class="t" style="left:648.00px;top:593.95px;font-size:12.5px;line-height:12.5px;letter-spacing:-0.946px;">100%</div>
<div class="a" style="left:512px;top:598.5px;width:107px;height:1px;background:#7a7a7a"></div>
<div class="a" style="left:512px;top:599.5px;width:107px;height:1px;background:#fff"></div>
<svg class="a" style="left:495px;top:593px;" width="12" height="12" viewBox="0 0 12 12"><circle cx="6" cy="6" r="5" fill="#f4f4f4" stroke="#5a6a7a" stroke-width="1"/><path d="M3 6 H9" stroke="#1a3a6a" stroke-width="1.4"/></svg>
<svg class="a" style="left:623px;top:593px;" width="12" height="12" viewBox="0 0 12 12"><circle cx="6" cy="6" r="5" fill="#f4f4f4" stroke="#5a6a7a" stroke-width="1"/><path d="M3 6 H9 M6 3 V9" stroke="#1a3a6a" stroke-width="1.4"/></svg>
<svg class="a" style="left:559.5px;top:593px;" width="9" height="13" viewBox="0 0 9 13"><circle cx="4.5" cy="6.2" r="3.6" fill="#6f8fb2" stroke="#34506e" stroke-width="1"/></svg>
<svg class="a" style="left:0;top:0" width="694" height="617" viewBox="0 0 694 617"><defs>
<linearGradient id="bl" x1="0" y1="0" x2="0" y2="1"><stop offset="0" stop-color="#8cc6fa"/><stop offset="1" stop-color="#2f83e0"/></linearGradient>
<linearGradient id="bl2" x1="0" y1="0" x2="0" y2="1"><stop offset="0" stop-color="#b4dcff"/><stop offset="1" stop-color="#4a98ea"/></linearGradient>
<linearGradient id="fold" x1="0" y1="0" x2="0" y2="1"><stop offset="0" stop-color="#fde27a"/><stop offset="1" stop-color="#f0b428"/></linearGradient>
<linearGradient id="flop" x1="0" y1="0" x2="0" y2="1"><stop offset="0" stop-color="#5a8cc0"/><stop offset="1" stop-color="#2c5c94"/></linearGradient>
<linearGradient id="prn" x1="0" y1="0" x2="0" y2="1"><stop offset="0" stop-color="#8a8a8a"/><stop offset="1" stop-color="#3a3a3a"/></linearGradient>
<linearGradient id="tg" x1="0" y1="0" x2="0" y2="1"><stop offset="0" stop-color="#6a9ac0"/><stop offset="1" stop-color="#163e62"/></linearGradient>
<linearGradient id="mt" x1="0" y1="0" x2="1" y2="1"><stop offset="0" stop-color="#f4f4f4"/><stop offset=".5" stop-color="#b0b0b0"/><stop offset="1" stop-color="#6a6a6a"/></linearGradient>
<linearGradient id="pour" x1="0" y1="0" x2="0" y2="1"><stop offset="0" stop-color="#1f6ed0"/><stop offset=".7" stop-color="#2f83e0"/><stop offset="1" stop-color="#2f83e0" stop-opacity=".25"/></linearGradient>
<radialGradient id="glb" cx=".4" cy=".35" r=".7"><stop offset="0" stop-color="#3a78c8"/><stop offset="1" stop-color="#10306a"/></radialGradient>
<radialGradient id="smi" cx=".5" cy=".4" r=".6"><stop offset="0" stop-color="#7cc0ff"/><stop offset="1" stop-color="#2f80e0"/></radialGradient>
<linearGradient id="rot" x1="0" y1="0" x2="0" y2="1"><stop offset="0" stop-color="#7aa6cc"/><stop offset="1" stop-color="#3a6a98"/></linearGradient>
</defs><rect x="13.5" y="10.5" width="12" height="15" fill="#fff" stroke="#8a8a8a"/><path d="M17.5 10.5 v15" stroke="#8a8a8a"/><path d="M21.5 10.5 v15" stroke="#8a8a8a"/><path d="M13.5 13.5 h12" stroke="#8a8a8a"/><path d="M13.5 16.5 h12" stroke="#8a8a8a"/><path d="M13.5 19.5 h12" stroke="#8a8a8a"/><path d="M13.5 22.5 h12" stroke="#8a8a8a"/><rect x="10.5" y="12.5" width="11" height="3" fill="#3a8ee0" stroke="#2a78cc"/><rect x="26.5" y="64.5" width="12" height="15" fill="#fff" stroke="#8a8a8a"/><path d="M30.5 64.5 v15" stroke="#8a8a8a"/><path d="M34.5 64.5 v15" stroke="#8a8a8a"/><path d="M26.5 67.5 h12" stroke="#8a8a8a"/><path d="M26.5 70.5 h12" stroke="#8a8a8a"/><path d="M26.5 73.5 h12" stroke="#8a8a8a"/><path d="M26.5 76.5 h12" stroke="#8a8a8a"/><rect x="23.5" y="66.5" width="11" height="3" fill="#3a8ee0" stroke="#2a78cc"/><g transform="translate(60,64)"><path d="M0.7 14.3 V2.2 Q0.7 1 2 1 H5.2 L6.5 2.8 H10 V6.5 H14.8 L12.2 14.3 Z" fill="url(#fold)" stroke="#a8560c" stroke-width="1.2" stroke-linejoin="round"/><path d="M1.2 14 L3.8 7.8 H15 L12.3 14 Z" fill="#f6c23a" stroke="#a8560c" stroke-width="1" stroke-linejoin="round"/><path d="M8.6 7.4 L12.6 3.4" stroke="#c83a10" stroke-width="2.8"/><path d="M10.4 0.5 H15.5 V5.6 Z" fill="#e8501c" stroke="#c83a10" stroke-width="0.8" stroke-linejoin="round"/><path d="M8.8 7.2 L12.8 3.2" stroke="#f47a3a" stroke-width="1.4"/></g><g transform="translate(86,65)"><rect x="0.6" y="0.6" width="13" height="13" rx="1.5" fill="url(#flop)" stroke="#183f72" stroke-width="1.2"/><rect x="2.6" y="1" width="9" height="6.2" fill="#fff"/><rect x="3.4" y="9.3" width="7.6" height="4" fill="#d8d8d8"/><rect x="4.4" y="10.2" width="2.2" height="2.8" fill="#fff"/><rect x="7.8" y="10.2" width="2.2" height="2.8" fill="#fff"/></g><g transform="translate(110,68)"><rect x="0.5" y="0.5" width="11.5" height="7.5" fill="#f8f8f8" stroke="#8a8a8a"/><path d="M1 1 L6.2 5 L11.5 1" fill="none" stroke="#9a9a9a" stroke-width="0.9"/><path d="M8.3 5.2 H12 V3 L16 6.3 L12 9.7 V7.5 H8.3 Z" fill="#f8b020" stroke="#b86a08" stroke-width="0.9" stroke-linejoin="round"/></g><g transform="translate(143,64)"><rect x="1" y="1.2" width="11.5" height="13.3" fill="#fdfdfd" stroke="#8a8e98"/><path d="M2.6 6.5 h4.5 M2.6 8.7 h3.2 M2.6 10.9 h2.6" stroke="#2f78c8" stroke-width="1.1"/><path d="M5.2 12.4 L6 9.8 L13 2.6 L15.6 5 L8.4 12 Z" fill="#f8c818" stroke="#a87808" stroke-width="0.7"/><path d="M12.2 3.4 L13.2 2 Q14.4 1.2 15.4 2.2 Q16.4 3.2 15.8 4.4 L14.8 5.6 Z" fill="#f06a9a"/><path d="M5.2 12.4 L5.8 10.4 L7.2 11.8 Z" fill="#2a2a2a"/></g><g transform="translate(178,64)"><path d="M0.5 0.5 H9 L12.5 4 V14.5 H0.5 Z" fill="#fdfdfd" stroke="#8a8e98"/><path d="M9 0.5 V4 H12.5 Z" fill="#e83030" stroke="#c02020" stroke-width="0.6"/><path d="M2.8 4.8 h4.2 M2.8 7 h6" stroke="#2f78c8" stroke-width="1.1"/><rect x="1" y="9" width="11" height="5" fill="#e81c1c"/><path d="M2.2 13 V10 h1.4 v1.5 h-1.4 M5.2 10 v3 h1 q1 0 1-1.5 q0-1.5-1-1.5 Z M8.8 13 v-3 h1.8 M8.8 11.5 h1.4" stroke="#fff" stroke-width="0.8" fill="none"/></g><g transform="translate(201,64)"><path d="M3.5 8 V0.8 H12.5 V8" fill="#fdfdfd" stroke="#6a6e78"/><path d="M5.2 3 h5.6 M5.2 5.2 h5.6" stroke="#2f78c8" stroke-width="1.1"/><rect x="0.6" y="7.8" width="14.8" height="6.6" rx="1.6" fill="url(#prn)" stroke="#2a2a2a" stroke-width="1"/><path d="M1.5 9.3 h13" stroke="#b0b0b0" stroke-width="0.8"/><rect x="11.3" y="10.8" width="1.8" height="1.4" fill="#7ae03a"/></g><g transform="translate(226,66)"><rect x="0.7" y="1" width="9" height="11.6" fill="#fbfbfb" stroke="#5e6068" stroke-width="1.1"/><path d="M11.5 7.2 L15.2 11.6" stroke="#7a5208" stroke-width="2.6" stroke-linecap="round"/><path d="M11.6 7.4 L15 11.4" stroke="#f0b020" stroke-width="1.4" stroke-linecap="round"/><circle cx="8.8" cy="3.6" r="3.5" fill="#d4e8fa" stroke="#6a88a8" stroke-width="1.1"/></g><g transform="translate(259,64)" fill="none" stroke="#b2b6c4" stroke-width="1"><path d="M0.4 5.6 L2.4 0.5 L4.4 5.6 M1.1 3.8 H3.7 M6.2 0.5 V5.6 H8.2 Q9.6 5.6 9.6 4.2 Q9.6 3 8.2 3 H6.2 M8 3 Q9.3 3 9.3 1.8 Q9.3 0.5 8 0.5 H6.2 M15 1.4 Q14.2 0.4 13 0.5 Q11.3 0.7 11.3 3 Q11.3 5.4 13 5.6 Q14.2 5.7 15 4.7"/><path d="M3.6 9.2 L7.4 12.4 L14.2 6.4 L15.6 8 L7.4 15 L2.2 10.6 Z" fill="#e2e5ee" stroke="#b2b6c4"/></g><text x="291.8" y="72.4" font-family="Liberation Sans" font-weight="700" font-size="8.6" text-anchor="middle" fill="#12304f" stroke="#12304f" stroke-width="0.35" textLength="15.6" lengthAdjust="spacingAndGlyphs">ABC</text><path d="M285.2 76.8 Q287.2 73.4 289.6 75.6 Q291.8 77.8 294 75.6 Q296.4 73.4 298.6 76.6" fill="none" stroke="#e81c1c" stroke-width="2.5" stroke-linecap="round"/><g transform="translate(317,64)"><path d="M0.3 0.6 L9.6 10.4 M15.7 0.6 L6.4 10.4" stroke="#6a6a6a" stroke-width="1.2"/><path d="M0.9 0.4 L9.8 9.6 M15.1 0.4 L6.2 9.6" stroke="#c8c8c8" stroke-width="0.7"/><ellipse cx="3.5" cy="11.6" rx="3.6" ry="2.7" transform="rotate(-38 3.5 11.6)" fill="#f08408" stroke="#b85a00" stroke-width="0.9"/><ellipse cx="12.5" cy="11.6" rx="3.6" ry="2.7" transform="rotate(38 12.5 11.6)" fill="#f08408" stroke="#b85a00" stroke-width="0.9"/><ellipse cx="3.3" cy="11.9" rx="1.3" ry="0.9" transform="rotate(-38 3.3 11.9)" fill="#dfe2ee"/><ellipse cx="12.7" cy="11.9" rx="1.3" ry="0.9" transform="rotate(38 12.7 11.9)" fill="#dfe2ee"/><path d="M6.5 7.5 L8 6 L9.5 7.5 L8 9.4 Z" fill="#f08408"/></g><path d="M342.5 64.5 H348.9 L351.0 66.6 V73.5 H342.5 Z" fill="#fdfdfd" stroke="#68727e"/><path d="M348.9 64.5 V66.6 H351.0" fill="none" stroke="#68727e" stroke-width="0.7"/><path d="M344 67.6 h3.5" stroke="#2f78c8" stroke-width="1.1"/><path d="M344 69.8 h4.6" stroke="#2f78c8" stroke-width="1.1"/><path d="M344 72 h3.6" stroke="#2f78c8" stroke-width="1.1"/><path d="M348.5 69.5 H354.9 L357.0 71.6 V78.5 H348.5 Z" fill="#fdfdfd" stroke="#68727e"/><path d="M354.9 69.5 V71.6 H357.0" fill="none" stroke="#68727e" stroke-width="0.7"/><path d="M350 72.6 h3.5" stroke="#2f78c8" stroke-width="1.1"/><path d="M350 74.8 h5" stroke="#2f78c8" stroke-width="1.1"/><path d="M350 77 h4" stroke="#2f78c8" stroke-width="1.1"/><g transform="translate(367,64)"><rect x="0.5" y="2.8" width="10" height="10" rx="1" fill="#d4d8e3" stroke="#b4b8c6"/><path d="M2.8 3 L5.5 0.6 L8.2 3 Z" fill="#dfe2ea" stroke="#b4b8c6" stroke-width="0.8"/></g><path d="M374.5 67.5 H380.9 L383.0 69.6 V78.1 H374.5 Z" fill="#e3e6ee" stroke="#b4b8c6"/><path d="M380.9 67.5 V69.6 H383.0" fill="none" stroke="#b4b8c6" stroke-width="0.7"/><path d="M376.4 72 h4.6" stroke="#b9bdca" stroke-width="1.1"/><path d="M376.4 74.2 h4.6" stroke="#b9bdca" stroke-width="1.1"/><path d="M376.4 76.4 h4.6" stroke="#b9bdca" stroke-width="1.1"/><g transform="translate(460,65)"><path d="M8.6 12.8 H6.4 Q1 12.6 1 7.2 Q1 2.6 6 2.6 H10.4 V0.6 L15.4 4.2 L10.4 7.8 V5.8 H6.4 Q4.2 5.8 4.2 7.6 Q4.2 9.8 6.6 9.8 H8.6 Z" fill="#ced2de" stroke="#a9adba" stroke-width="1" stroke-linejoin="round"/></g><g><circle cx="512.8" cy="71.7" r="7.6" fill="url(#glb)" stroke="#0e2a5a" stroke-width="0.8"/><path d="M507.6 67.6 Q509 65.2 512 65 L513.6 66.4 L511.6 68.4 L509.4 69.6 Z" fill="#c8d428"/><path d="M514.6 65.6 Q517.6 65.6 519.4 68.6 L518.6 70.4 L516 69.6 L514.4 67.6 Z" fill="#a8c828"/><path d="M511.6 68.6 L514 69 L513 70.6 Z" fill="#d8e038"/><rect x="506.8" y="72.4" width="5.6" height="4.4" rx="2.1" fill="none" stroke="#fff" stroke-width="1.5"/><rect x="513.2" y="72.4" width="5.6" height="4.4" rx="2.1" fill="none" stroke="#fff" stroke-width="1.5"/><path d="M510.4 74.6 H515.2" stroke="#fff" stroke-width="1.5"/></g><g fill="none" stroke="#b4b8c6" stroke-width="1"><path d="M531.5 70.8 L534.1 65.2 L536.7 70.8 M532.5 68.8 h3.2"/><path d="M532.1999999999999 73.8 h4.2 L532.0 79.39999999999999 h4.6"/><path d="M540.2 66 h3.4 v6.6 h2 L541.9 77.8 L538.2 72.6 h2 Z" fill="#d6dae5"/></g><g fill="none" stroke="#b4b8c6" stroke-width="1"><path d="M557.1999999999999 65.2 h4.2 L557.0 70.8 h4.6"/><path d="M556.5 79.39999999999999 L559.1 73.8 L561.7 79.39999999999999 M557.5 77.39999999999999 h3.2"/><path d="M565.2 66 h3.4 v6.6 h2 L566.9 77.8 L563.2 72.6 h2 Z" fill="#d6dae5"/></g><g transform="translate(27,94)"><path d="M5.4 0.8 Q1.2 6 1.4 11.6 L3 13.2 H8 L9.6 11.6 Q9.8 6 5.6 0.8 Z" fill="#f8b810" stroke="#7a5200" stroke-width="0.9" stroke-linejoin="round"/><path d="M5.5 1.6 Q3.2 6 3.4 11" fill="none" stroke="#ffe070" stroke-width="1"/><path d="M5.5 2 V9" stroke="#5a3c00" stroke-width="0.8"/><circle cx="5.5" cy="9.6" r="0.9" fill="#5a3c00"/><rect x="1.6" y="13.6" width="8" height="3" rx="0.6" fill="#5a82a8" stroke="#1f3f62" stroke-width="0.9"/></g><g fill="none" stroke="#2a7ad8" stroke-width="1.3"><path d="M51 99.6 H62.6"/><path d="M48.4 99.6 L53 96.6 V102.6 Z" fill="#2a7ad8" stroke="none"/><path d="M49.6 106.4 H63"/><path d="M60.2 103.4 L56.6 106.4 L60.2 109.4 M63.6 103.4 L60 106.4 L63.6 109.4"/></g><g><path d="M369.6 98.2 Q374.8 98.4 374.6 104 V110.6" fill="none" stroke="url(#pour)" stroke-width="3.4"/><path d="M360.2 102.8 L363 98 L369.2 97.6 L373 102.4 L366.6 109.4 Z" fill="url(#mt)" stroke="#3a3a3a" stroke-width="0.9" stroke-linejoin="round"/><path d="M362.6 103.6 L367.4 99" stroke="#fff" stroke-width="1.6" stroke-opacity=".8"/><ellipse cx="365.6" cy="96.8" rx="3.7" ry="2" transform="rotate(-8 365.6 96.8)" fill="#dcdcdc" stroke="#3a3a3a" stroke-width="0.9"/><ellipse cx="365.4" cy="96.6" rx="1.9" ry="0.8" fill="#fff" stroke="#6a6a6a" stroke-width="0.4"/><circle cx="368.4" cy="99.8" r="0.9" fill="#1a3a6a"/></g><g><path d="M602.2 98 A4.7 4.7 0 1 0 605 103.4" fill="none" stroke="#2a4c70" stroke-width="4.2"/><path d="M601.2 102.8 L605.6 97.2 L610.4 102.2 Z" fill="#4f7faa" stroke="#2a4c70" stroke-width="0.9" stroke-linejoin="round"/><path d="M602.2 98 A4.7 4.7 0 1 0 605 103.4" fill="none" stroke="url(#rot)" stroke-width="2.6"/><path d="M600 97.4 Q597.4 97.6 596.4 100" fill="none" stroke="#a8c8e4" stroke-width="0.9"/></g><g fill="none" stroke="#1b6cd8" stroke-width="1.8" ><circle cx="627" cy="97.2" r="1.9"/><path d="M627 99.2 V108.6 M623.4 101.4 H630.6"/><path d="M620 103.6 Q620.8 108.4 627 108.6 Q633.2 108.4 634 103.6" stroke-width="2.5"/><path d="M618.4 105 L620 102.4 L622 104.8 Z M635.6 105 L634 102.4 L632 104.8 Z" fill="#1b6cd8" stroke="none"/></g><g fill="none" stroke="#dcdcdc" stroke-width="1.4" ><circle cx="55.4" cy="178.79999999999998" r="1.9"/><path d="M55.4 180.79999999999998 V190.2 M51.8 183.0 H59.0"/><path d="M48.4 185.2 Q49.199999999999996 190.0 55.4 190.2 Q61.6 190.0 62.4 185.2" stroke-width="2.0999999999999996"/><path d="M46.8 186.6 L48.4 184.0 L50.4 186.4 Z M64.0 186.6 L62.4 184.0 L60.4 186.4 Z" fill="#dcdcdc" stroke="none"/></g><g fill="none" stroke="#858585" stroke-width="1.7" ><circle cx="54.8" cy="178.2" r="1.9"/><path d="M54.8 180.2 V189.6 M51.199999999999996 182.4 H58.4"/><path d="M47.8 184.6 Q48.599999999999994 189.4 54.8 189.6 Q61.0 189.4 61.8 184.6" stroke-width="2.4"/><path d="M46.199999999999996 186 L47.8 183.4 L49.8 185.8 Z M63.4 186 L61.8 183.4 L59.8 185.8 Z" fill="#858585" stroke="none"/></g><path d="M162.4 132.2 Q161.4 130.4 159.6 131 Q158.2 131.6 157.8 133.6 L156 141 Q155.4 143.6 153.6 143.6 Q152.6 143.6 152.4 142.6" fill="none" stroke="#2f3f62" stroke-width="1.9" stroke-linecap="round"/><path d="M154.6 135.6 H160.8" stroke="#2f3f62" stroke-width="1.5"/><path d="M161.6 136.6 L166 142.2 M166 136.6 L161.6 142.2" stroke="#2f3f62" stroke-width="1.7"/><path d="M154.2 128.6 L155.04 130.16 L156.6 131 L155.04 131.84 L154.2 133.4 L153.35999999999999 131.84 L151.79999999999998 131 L153.35999999999999 130.16 Z" fill="#f8c020"/><path d="M159.6 127.00000000000001 L160.23 128.17000000000002 L161.4 128.8 L160.23 129.43 L159.6 130.60000000000002 L158.97 129.43 L157.79999999999998 128.8 L158.97 128.17000000000002 Z" fill="#f8c020"/><path d="M164.4 128.6 L165.1 129.9 L166.4 130.6 L165.1 131.29999999999998 L164.4 132.6 L163.70000000000002 131.29999999999998 L162.4 130.6 L163.70000000000002 129.9 Z" fill="#f8c020"/><path d="M167 133.0 L167.56 134.04 L168.6 134.6 L167.56 135.16 L167 136.2 L166.44 135.16 L165.4 134.6 L166.44 134.04 Z" fill="#f8c020"/><path d="M178.6 130.4 H190.6 V133.4 H189 Q188.6 132.2 187.4 132.2 H182.6 L186.6 136.3 L182.2 140.8 H187.6 Q188.8 140.8 189.2 139.4 H190.8 V142.6 H178.6 V141 L183.2 136.3 L178.6 131.8 Z" fill="#8fcaff" stroke="#1b6ad0" stroke-width="1" stroke-linejoin="round"/><path d="M27.6 564.6 V578.6 L31.4 575.4 L33.6 580 L35.6 579 L33.4 574.6 H37.6 Z" fill="#fff" stroke="#222" stroke-width="0.9"/><rect x="82.5" y="567.5" width="15" height="9.5" fill="url(#bl)" stroke="#1a4a9c" stroke-width="1"/><ellipse cx="115" cy="572.4" rx="7.8" ry="5.1" fill="url(#bl)" stroke="#1c58b0" stroke-width="1"/><g><path d="M132.4 572.2 Q135.4 570.8 136.4 574 Q137.6 577.6 141.6 575.6 Q145.4 573.6 148 575.8" fill="none" stroke="#2a7ad8" stroke-width="1.5"/><path d="M137.6 574.8 L138.6 571.6 L145.2 565 L147.8 567.4 L141 574 Z" fill="#f8c818" stroke="#a87808" stroke-width="0.7"/><path d="M144.4 565.8 L145.6 564.6 Q146.8 563.8 147.8 564.8 Q148.8 565.8 148.2 567 L147 568.2 Z" fill="#f06a9a"/><path d="M137.6 574.8 L138.3 572.6 L139.8 574 Z" fill="#2a2a2a"/></g><path d="M159.6 565.6 H171.8 V570 H170.6 Q170.2 567.8 168.2 567.6 H167.6 V576 Q167.6 577.4 169.6 577.6 V578.8 H161.8 V577.6 Q163.8 577.4 163.8 576 V567.6 H163.2 Q161.2 567.8 160.8 570 H159.6 Z" fill="url(#tg)"/><g><path d="M190 564.8 Q197.4 564.8 197.4 569.8 Q197.4 572.6 194.4 574 L196.8 578.4 L191.4 574.8 Q182.6 575 182.6 569.8 Q182.6 564.8 190 564.8 Z" fill="#fbfbfb" stroke="#8a8e98" stroke-width="1.1" stroke-linejoin="round"/><path d="M186 567.8 h8 M186 570 h8 M186 572.2 h5.4" stroke="#2f78c8" stroke-width="1"/></g><path d="M221.8 564.2 L229.2 571.4 L221.8 578.6 L214.4 571.4 Z" fill="url(#bl2)" stroke="#1a5ac0" stroke-width="1.2" stroke-linejoin="round"/><g><circle cx="257.3" cy="571.3" r="7.2" fill="url(#smi)" stroke="#1a5ac0" stroke-width="1"/><circle cx="254.8" cy="569.2" r="1" fill="#124a9a"/><circle cx="259.8" cy="569.2" r="1" fill="#124a9a"/><path d="M253.2 572.8 Q257.3 577 261.4 572.8" fill="none" stroke="#124a9a" stroke-width="1.1"/></g><path d="M286.6 572.4 L291.2 567.8 V570.4 H296 V567.8 L300.6 572.4 L296 577 V574.4 H291.2 V577 Z" fill="#a4d4ff" stroke="#1a5ac0" stroke-width="1.1" stroke-linejoin="round"/><g><rect x="323.4" y="565.5" width="13.4" height="13" fill="url(#bl2)" stroke="#1a4ab0" stroke-width="1.1"/><path d="M326.9 565.5 V578.5 M323.4 568.4 H336.8" stroke="#1a4ab0" stroke-width="1"/><rect x="327.6" y="566.2" width="8.6" height="1.6" fill="#eaf4ff"/><rect x="324.2" y="566.2" width="2" height="1.6" fill="#eaf4ff"/></g><path d="M361 564.8 H371 Q373.2 564.8 373.2 567 V572 Q373.2 574.2 371 574.2 H365.4 L359.6 578.4 L362.6 574.2 H361 Q358.8 574.2 358.8 572 V567 Q358.8 564.8 361 564.8 Z" fill="url(#bl)" stroke="#1a4ab0" stroke-width="1.1" stroke-linejoin="round"/><path d="M401.50 565.40 L403.32 570.29 L408.54 570.51 L404.45 573.76 L405.85 578.79 L401.50 575.90 L397.15 578.79 L398.55 573.76 L394.46 570.51 L399.68 570.29 Z" fill="url(#bl2)" stroke="#1a4ab0" stroke-width="1.2" stroke-linejoin="miter"/><path d="M445.3 565.6 L453.4 565.6 L448.6 571.2 L453.4 577.6 L440.5 577.6 L440.5 572.6 Z" fill="none" stroke="#5a5e66" stroke-width="1"/><circle cx="445.3" cy="565.6" r="1.5" fill="#8cc6fa" stroke="#123c80" stroke-width="0.9"/><circle cx="453.4" cy="565.6" r="1.5" fill="#8cc6fa" stroke="#123c80" stroke-width="0.9"/><circle cx="448.6" cy="571.2" r="1.5" fill="#8cc6fa" stroke="#123c80" stroke-width="0.9"/><circle cx="453.4" cy="577.6" r="1.5" fill="#8cc6fa" stroke="#123c80" stroke-width="0.9"/><circle cx="440.5" cy="577.6" r="1.5" fill="#8cc6fa" stroke="#123c80" stroke-width="0.9"/><circle cx="440.5" cy="572.6" r="1.5" fill="#8cc6fa" stroke="#123c80" stroke-width="0.9"/><g><path d="M476.6 567.4 L480 564.4 L483.4 567.4" fill="none" stroke="#b8bcc4" stroke-width="1"/><rect x="472.8" y="567.8" width="14.4" height="11.4" fill="#f0a020" stroke="#b0500c" stroke-width="1.4"/><rect x="475" y="570" width="10" height="7" fill="#fff" stroke="#c87818" stroke-width="0.6"/><text x="480" y="576.6" font-family="Liberation Sans" font-weight="700" font-size="7.6" text-anchor="middle" fill="#1a3a6a">A</text></g><g><circle cx="507.8" cy="569" r="4.8" fill="#ffc830" stroke="#e09a10" stroke-width="0.8"/><rect x="497.4" y="568.6" width="8.2" height="8" fill="#f0581a" stroke="#a02c08" stroke-width="0.9"/><path d="M507 570.6 L511.8 579 H502.4 Z" fill="#5c88ae" stroke="#17344f" stroke-width="1" stroke-linejoin="round"/><path d="M507 573.6 L509.4 577.8 H504.6 Z" fill="#a8c4dc"/></g><g fill="#d3d6e0" stroke="#b0b4c0" stroke-width="0.9" stroke-linejoin="round"><path d="M530.6 564.4 H535.6 V569.6 L538.6 572 H533.6 L530.6 569.6 Z"/><path d="M538.4 572.4 L541 570 H546 V575.4 L543.4 578 H538.4 Z"/><path d="M538.4 572.4 H543.4 V578 M543.4 572.4 L546 570" fill="none"/></g><path d="M379 596.5 H386 M382.5 592 V602" stroke="#1a3ad0" stroke-width="1" fill="none" shape-rendering="crispEdges"/><rect x="382.5" y="596.5" width="10" height="6" fill="none" stroke="#000" stroke-width="1" stroke-dasharray="1 1" shape-rendering="crispEdges"/><g><rect x="441.5" y="592.5" width="8" height="9" fill="none" stroke="#000" stroke-width="1" stroke-dasharray="1 1" shape-rendering="crispEdges"/><path d="M439.6 597 l2-1.6 v3.2 Z M451.4 597 l-2-1.6 v3.2 Z M445.5 590.8 l-1.6 2 h3.2 Z M445.5 603 l-1.6-2 h3.2 Z" fill="#000"/></g></svg>
<svg class="a" style="left:0px;top:0px;" width="694" height="617" viewBox="0 0 694 617"><path d="M224.8 23.8 H244.6 V44.8 H252.8 L234.6 64.6 L216.4 44.8 H224.8 Z" fill="#fff" stroke="#ed1c24" stroke-width="2.8" stroke-linejoin="miter"/><path d="M407.3 50.7 H427.6 V71.5 H435.8 L417.6 92.2 L399.2 71.5 H407.3 Z" fill="#fff" stroke="#ed1c24" stroke-width="2.8" stroke-linejoin="miter"/><path d="M33.4 561.6 H55.6 V552.4 L77.6 571.8 L55.6 591.4 V582 H33.4 Z" fill="#fff" stroke="#ed1c24" stroke-width="2.8" stroke-linejoin="miter"/><path d="M95.5 563.5 L62.6 454.2 M58.6 469.5 L62.4 453.6 L74.5 455.6" fill="none" stroke="#ed1c24" stroke-width="2.8" stroke-linecap="butt"/></svg>
<div class="t" style="left:231.20px;top:41.55px;font-size:11.5px;line-height:11.5px;font-weight:700;color:#f0302a;">3</div>
<div class="t" style="left:414.20px;top:69.45px;font-size:11.5px;line-height:11.5px;font-weight:700;color:#f0302a;">2</div>
<div class="t" style="left:55.70px;top:566.85px;font-size:11.5px;line-height:11.5px;font-weight:700;color:#f0302a;">1</div>
</body></html>
